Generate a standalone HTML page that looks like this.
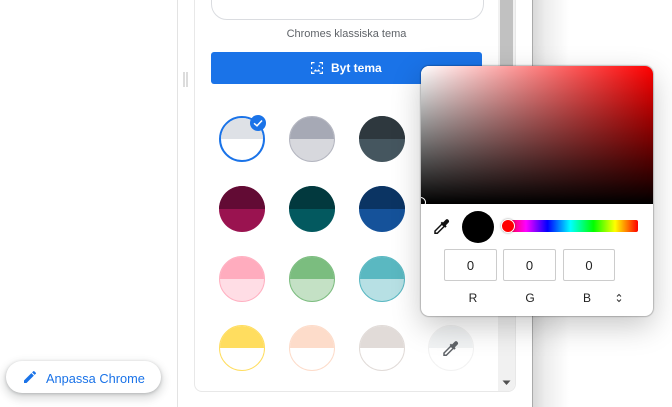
<!DOCTYPE html>
<html>
<head>
<meta charset="utf-8">
<style>
html,body{margin:0;padding:0;width:672px;height:407px;overflow:hidden;background:#fff;font-family:"Liberation Sans",sans-serif}
.a{position:absolute}
.c{position:absolute;width:46px;height:46px;border-radius:50%;box-sizing:border-box;overflow:hidden}
.c i{position:absolute;left:0;right:0;top:0;height:50%;display:block}
.in{position:absolute;top:249px;height:32px;box-sizing:border-box;border:1px solid #ccc;border-radius:2px;text-align:center;line-height:32px;font-size:13px;color:#222;background:#fff}
.l{position:absolute;top:291px;font-size:12px;color:#222;width:20px;text-align:center}
</style>
</head>
<body>
<div style="position:relative;width:672px;height:407px;overflow:hidden">
<div class="a" style="left:177px;top:0;width:1px;height:407px;background:#e3e3e3"></div>

<!-- panel -->
<div class="a" style="left:178px;top:0;width:354px;height:407px;background:#fff;border-right:1px solid #aaa"></div>
<div class="a" style="left:533px;top:0;width:36px;height:407px;background:linear-gradient(to right,rgba(0,0,0,.15),rgba(0,0,0,.07) 35%,rgba(0,0,0,0))"></div>
<div class="a" style="left:183px;top:72px;width:2px;height:15px;background:#dcdcdc"></div>
<div class="a" style="left:186px;top:72px;width:2px;height:15px;background:#dcdcdc"></div>
<!-- card -->
<div class="a" style="left:194px;top:-10px;width:322px;height:402px;box-sizing:border-box;border:1px solid #e8e8e8;border-radius:8px;background:#fff;overflow:hidden">
  <div class="a" style="left:303px;top:0;width:18px;height:400px;background:#f1f1f1"></div>
  <div class="a" style="left:305px;top:0;width:13px;height:230px;background:#c1c1c1"></div>
</div>
<svg class="a" style="left:502px;top:380px" width="10" height="6"><path d="M0.500 0.500H8.500L4.500 5z" fill="#505050"/></svg>

<div class="a" style="left:211px;top:-20px;width:273px;height:40px;box-sizing:border-box;border:1px solid #dadce0;border-radius:16px;background:#fff"></div>
<div class="a" style="left:211px;top:27px;width:271px;text-align:center;font-size:11px;line-height:14px;color:#5f6368">Chromes klassiska tema</div>

<div class="a" style="left:211px;top:52px;width:271px;height:32px;background:#1a73e8;border-radius:3px"></div>
<svg class="a" style="left:310px;top:61px" width="14" height="14" viewBox="0 0 14 14" fill="none" stroke="#fff" stroke-width="1.200"><path d="M4.500 1.600H1.600V3.500M9.500 1.600H12.400V3.500M1.600 6V8M12.400 6V8M1.600 10.500V12.400H4.500M12.400 10.500V12.400H9.500"/><path d="M3.500 10.500L5.500 8.300L7 9.800L8.500 8.300L10.500 10.500z" fill="#fff" stroke="none"/><circle cx="9.300" cy="5" r=".9" fill="#fff" stroke="none"/></svg>
<div class="a" style="left:331px;top:61px;font-size:12px;line-height:15px;font-weight:bold;color:#fff">Byt tema</div>

<!-- row 1 -->
<div class="c" style="left:219px;top:116px;background:#fff;border:2px solid #1a73e8"><i style="background:#dee1e6;height:21px"></i></div>
<div class="a" style="left:250px;top:115px;width:16px;height:16px;border-radius:50%;background:#1a73e8"></div>
<svg class="a" style="left:250px;top:115px" width="16" height="16"><path d="M4 8.300L7 10.800L12 5.500" fill="none" stroke="#fff" stroke-width="1.500"/></svg>
<div class="c" style="left:289px;top:116px;background:#d7d8dd;border:1px solid #b4b6c0"><i style="background:#a6a9b5"></i></div>
<div class="c" style="left:359px;top:116px;background:#45565f"><i style="background:#2e383e"></i></div>
<!-- row 2 -->
<div class="c" style="left:219px;top:186px;background:#9a1350"><i style="background:#620b34"></i></div>
<div class="c" style="left:289px;top:186px;background:#03595f"><i style="background:#02393e"></i></div>
<div class="c" style="left:359px;top:186px;background:#15529a"><i style="background:#0b3463"></i></div>
<!-- row 3 -->
<div class="c" style="left:219px;top:256px;background:#ffdde5;border:1px solid #ffb0c1"><i style="background:#ffacbe"></i></div>
<div class="c" style="left:289px;top:256px;background:#c4e1c5;border:1px solid #7dbd80"><i style="background:#7bbd7f"></i></div>
<div class="c" style="left:359px;top:256px;background:#b7e0e4;border:1px solid #5ab8c2"><i style="background:#5ab8c1"></i></div>
<!-- row 4 -->
<div class="c" style="left:219px;top:325px;background:#fff;border:1px solid #ffdd5f"><i style="background:#ffdd5f"></i></div>
<div class="c" style="left:289px;top:325px;background:#fff;border:1px solid #fddcca"><i style="background:#fddcca"></i></div>
<div class="c" style="left:359px;top:325px;background:#fff;border:1px solid #e1dbd8"><i style="background:#e1dbd8"></i></div>
<div class="c" style="left:428px;top:325px;background:#fff;border:1px solid #f2f2f2"><i style="background:#f1f3f4"></i></div>
<svg class="a" style="left:442px;top:340px" width="17" height="17" viewBox="0 0 17 17" fill="none" stroke="#5f6368"><path d="M2 15.300V13L9.500 5.500L11.800 7.800L4.300 15.300z" stroke-width="1.500"/><path d="M8.300 4.300L13 9" stroke-width="2"/><path d="M11 6.300L14 3.300" stroke-width="4" stroke-linecap="round"/></svg>

<!-- popup -->
<div class="a" style="left:421px;top:66px;width:232px;height:250px;background:#fff;border-radius:8px;box-shadow:0 0 1px 1px rgba(0,0,0,.22),0 10px 30px rgba(0,0,0,.22);overflow:hidden">
  <div class="a" style="left:0;top:0;width:232px;height:138px;background:linear-gradient(to top,#000,rgba(0,0,0,0)),linear-gradient(to right,#fff,#f00)"></div>
  <div class="a" style="left:-6px;top:131px;width:9px;height:9px;border:1.500px solid #fff;border-radius:50%;box-sizing:content-box"></div>
</div>
<svg class="a" style="left:433px;top:218px" width="17" height="17" viewBox="0 0 17 17" fill="none" stroke="#111"><path d="M2 15.300V13L9.500 5.500L11.800 7.800L4.300 15.300z" stroke-width="1.500"/><path d="M8.300 4.300L13 9" stroke-width="2"/><path d="M11 6.300L14 3.300" stroke-width="4" stroke-linecap="round"/></svg>
<div class="a" style="left:462px;top:211px;width:32px;height:32px;border-radius:50%;background:#000"></div>
<div class="a" style="left:503px;top:220px;width:135px;height:12px;border-radius:2px;background:linear-gradient(to right,#f00 0%,#f0f 17%,#00f 33%,#0ff 50%,#0f0 67%,#ff0 83%,#f00 100%)"></div>
<div class="a" style="left:501px;top:219px;width:14px;height:14px;box-sizing:border-box;border-radius:50%;background:#f00;border:1.500px solid #fff;box-shadow:0 0 2px rgba(0,0,0,.4)"></div>
<div class="in" style="left:444px;width:53px">0</div>
<div class="in" style="left:503px;width:53px">0</div>
<div class="in" style="left:563px;width:52px">0</div>
<div class="l" style="left:463px">R</div>
<div class="l" style="left:520px">G</div>
<div class="l" style="left:577px">B</div>
<svg class="a" style="left:615px;top:293px" width="8" height="10" fill="none" stroke="#333" stroke-width="1"><path d="M2 3.500L4 1.500L6 3.500M2 6.500L4 8.500L6 6.500"/></svg>

<!-- pill -->
<div class="a" style="left:6px;top:361px;width:155px;height:32px;border-radius:16px;background:#fff;box-shadow:0 1px 3px rgba(60,64,67,.3),0 4px 8px 3px rgba(60,64,67,.15)"></div>
<svg class="a" style="left:22px;top:369px" width="16" height="16" viewBox="0 0 24 24"><path d="M3 17.250V21h3.750L17.810 9.940l-3.750-3.750L3 17.250zM20.710 7.040a1 1 0 0 0 0-1.410l-2.340-2.340a1 1 0 0 0-1.410 0l-1.830 1.830 3.750 3.750 1.830-1.830z" fill="#1a73e8"/></svg>
<div class="a" style="left:46px;top:371px;font-size:12.800px;line-height:15px;color:#1a73e8">Anpassa Chrome</div>
</div>
</body>
</html>
